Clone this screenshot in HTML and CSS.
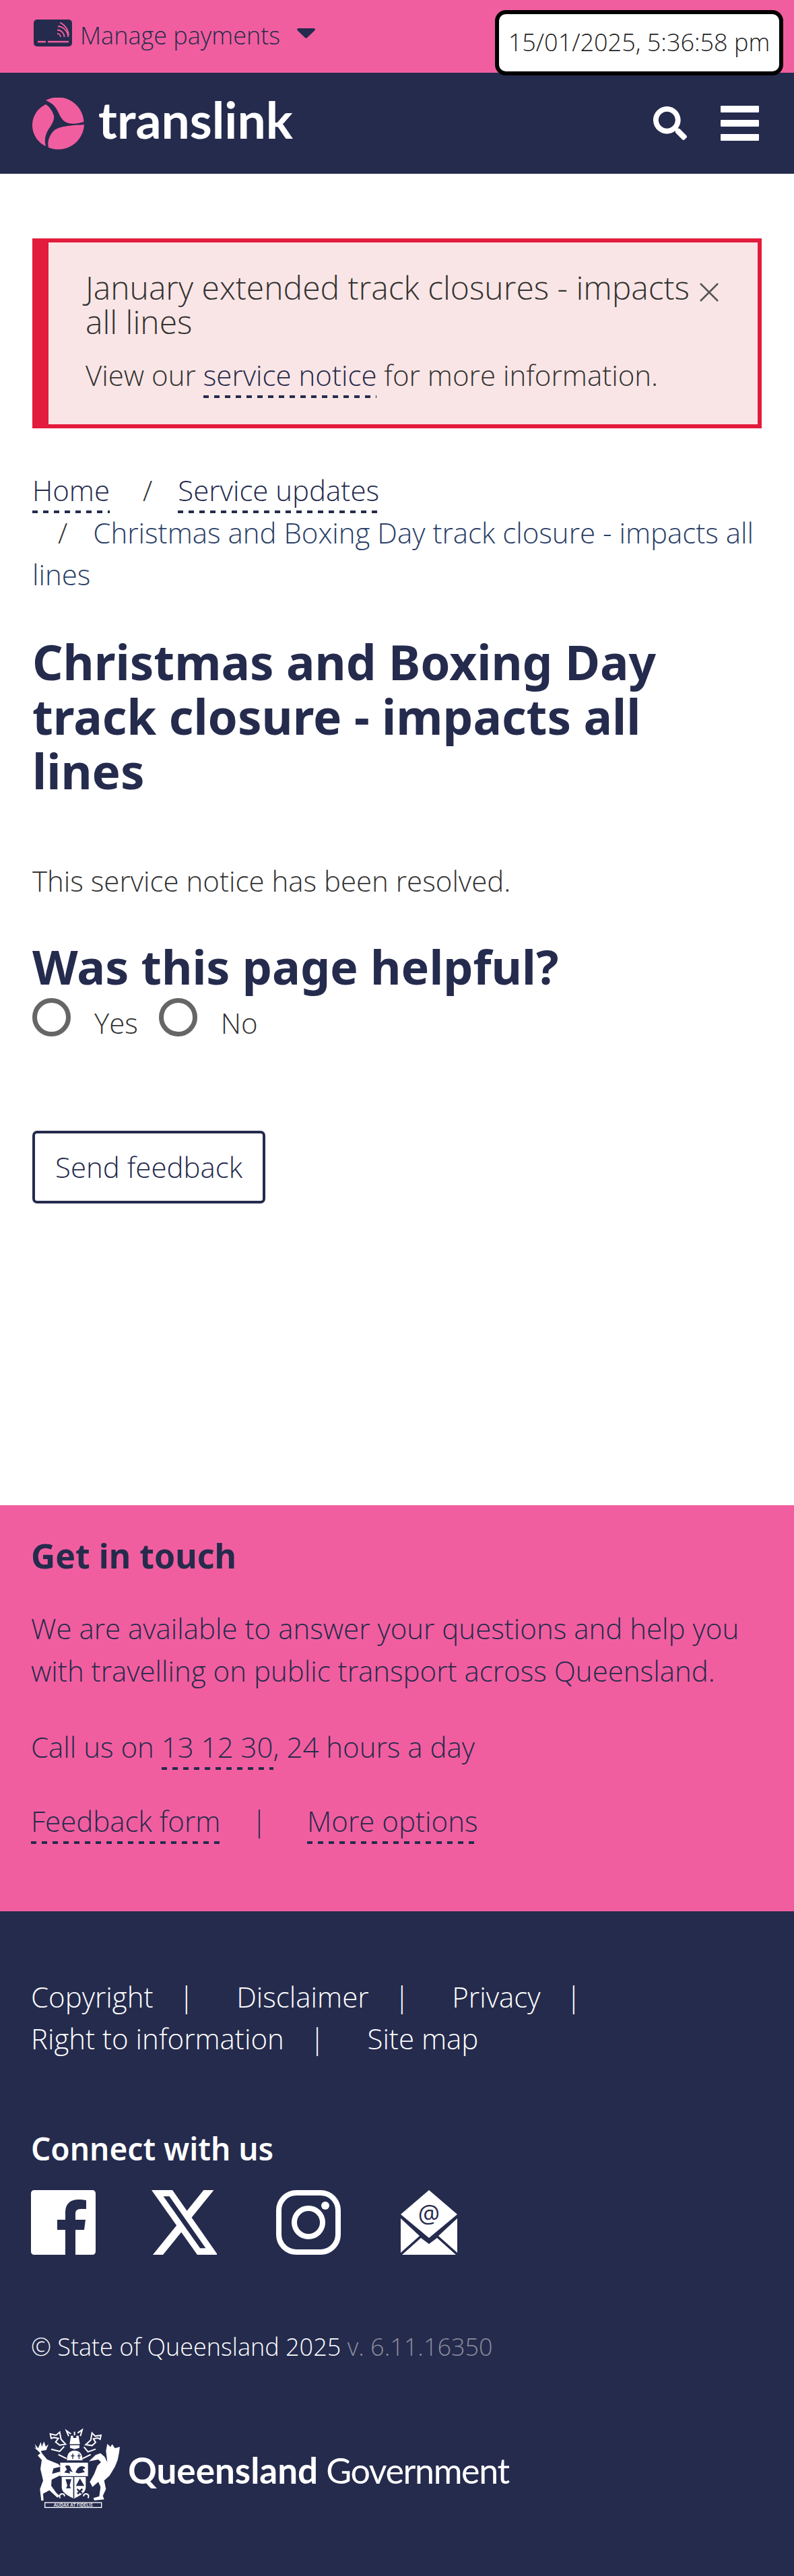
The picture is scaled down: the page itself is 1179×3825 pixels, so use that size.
FILE: index.html
```html
<!DOCTYPE html>
<html lang="en">
<head>
  <meta charset="UTF-8">
  <meta name="viewport" content="width=device-width, initial-scale=1.0">
  <title>Christmas and Boxing Day track closure - impacts all lines</title>
  <link rel="stylesheet" href="styles.css">
</head>
<body>
  <div class="top-bar">
    <a class="payments" href="#">
      <svg class="card-icon" viewBox="0 0 57 40">
        <rect width="57" height="40" rx="5" fill="#252b4d"/>
        <path d="M6 33H18M21 33H52" stroke="#f15e9f" stroke-width="2.4" fill="none"/>
        <path d="M35 21a5 5 0 0 1 5 5M35 15.500a10.500 10.500 0 0 1 10.500 10.500M36 10a16 16 0 0 1 15 16M39 4.500a22 22 0 0 1 13 19" stroke="#f15e9f" stroke-width="1.800" fill="none"/>
      </svg>
      <span>Manage payments</span>
      <svg class="caret" viewBox="0 0 27 15"><path d="M2 0H25C27 0 27.500 2 26 3.500L15 14C14 15 13 15 12 14L1 3.500C-.5 2 0 0 2 0Z" fill="#252b4d"/></svg>
    </a>
    <div class="clock">15/01/2025, 5:36:58 pm</div>
  </div>

  <header class="site-header">
    <a class="logo" href="#">
      <svg class="logo-mark" viewBox="0 0 77 77">
        <path d="M20 4A38.500 38.500 0 0 1 76.500 36C66 39 56 40 49 36C41 31 40 22 34 14C30 9 25 6 20 4Z" fill="#f15e9f"/>
        <path d="M20 10A34 34 0 0 0 20 72C17 62 20 54 24 47C29 40 33 33 32 27C30 20 26 14 20 10Z" fill="#f15e9f"/>
        <path d="M77 40A38.500 38.500 0 0 1 24 74C22 66 25 56 32 49C40 42 60 41 77 40Z" fill="#f15e9f"/>
      </svg>
      <span class="logo-text">translink</span>
    </a>
    <div class="header-actions">
      <svg class="search-icon" viewBox="0 0 512 512"><path fill="#fff" d="M505 442.700L405.300 343c-4.500-4.500-10.600-7-17-7H372c27.600-35.300 44-79.700 44-128C416 93.100 322.900 0 208 0S0 93.100 0 208s93.100 208 208 208c48.300 0 92.700-16.400 128-44v16.300c0 6.400 2.500 12.500 7 17l99.700 99.700c9.400 9.400 24.600 9.400 33.900 0l28.300-28.300c9.400-9.400 9.400-24.600.1-34zM208 336c-70.700 0-128-57.200-128-128 0-70.700 57.200-128 128-128 70.700 0 128 57.200 128 128 0 70.700-57.200 128-128 128z"/></svg>
      <div class="burger"><i></i><i></i><i></i></div>
    </div>
  </header>

  <main class="content">
    <div class="alert">
      <div class="alert-top">
        <h3>January extended track closures - impacts all lines</h3>
        <svg class="alert-close" viewBox="0 0 28 28"><path d="M1 1L27 27M27 1L1 27" stroke="#555" stroke-width="2.500"/></svg>
      </div>
      <p>View our <a href="#">service notice</a> for more information.</p>
    </div>

    <ol class="breadcrumb">
      <li><a href="#">Home</a></li>
      <li><span class="sep">/</span><a href="#">Service updates</a></li>
      <li class="current"><span class="sep">/</span>Christmas and Boxing Day track closure - impacts all lines</li>
    </ol>

    <h1>Christmas and Boxing Day track closure - impacts all lines</h1>
    <p class="resolved">This service notice has been resolved.</p>

    <h2>Was this page helpful?</h2>
    <div class="helpful">
      <label><i class="radio"></i>Yes</label>
      <label><i class="radio"></i>No</label>
    </div>
    <button class="feedback-btn">Send feedback</button>
  </main>

  <section class="get-in-touch">
    <h4>Get in touch</h4>
    <p class="intro">We are available to answer your questions and help you with travelling on public transport across Queensland.</p>
    <p>Call us on <a href="#">13 12 30</a>, 24 hours a day</p>
    <p class="touch-links"><a href="#">Feedback form</a><span class="pipe">|</span><a href="#">More options</a></p>
  </section>

  <footer class="site-footer">
    <ul class="footer-links">
      <li><a href="#">Copyright</a><span class="pipe">|</span></li>
      <li><a href="#">Disclaimer</a><span class="pipe">|</span></li>
      <li><a href="#">Privacy</a><span class="pipe">|</span></li>
      <li><a href="#">Right to information</a><span class="pipe">|</span></li>
      <li><a href="#">Site map</a></li>
    </ul>

    <h4>Connect with us</h4>
    <div class="social">
      <svg class="fb" viewBox="0 0 96 96">
        <path fill="#fff" fill-rule="evenodd" d="M5 0H91C94 0 96 2 96 5V91C96 94 94 96 91 96H66V59H79L81 44H66V35C66 31 68 28 74 28H82V15C79 14.500 75 14 70 14C59 14 51 20 51 33V44H39V59H51V96H5C2 96 0 94 0 91V5C0 2 2 0 5 0Z"/>
      </svg>
      <svg class="x" viewBox="1.250 2.250 21.300 19.500" preserveAspectRatio="none">
        <path fill="#fff" d="M18.244 2.250h3.308l-7.227 8.260 8.502 11.240H16.170l-5.214-6.817L4.990 21.750H1.680l7.730-8.835L1.254 2.250H8.080l4.713 6.231zm-1.161 17.520h1.833L7.084 4.126H5.117z"/>
      </svg>
      <svg class="insta" viewBox="0 0 96 96">
        <rect x="4" y="4" width="88" height="88" rx="26" fill="none" stroke="#fff" stroke-width="8"/>
        <circle cx="48" cy="48" r="21" fill="none" stroke="#fff" stroke-width="8"/>
        <circle cx="73" cy="23" r="6" fill="#fff"/>
      </svg>
      <svg class="mail" viewBox="0 0 85 96">
        <path fill="#fff" d="M42 0L84 36L42 71L0 36Z"/>
        <path fill="#fff" d="M0 42L28 68L0 93ZM84 42L56 68L84 93ZM2 96L30 71L42 80L54 71L82 96Z"/>
        <text class="mail-at" x="42" y="48" text-anchor="middle">@</text>
      </svg>
    </div>

    <p class="copyright">© State of Queensland 2025 <span class="version">v. 6.11.16350</span></p>

    <div class="qld-gov">
      <svg class="crest" viewBox="0 0 450 405">
        <g fill="#fff">
          <path d="M28 112L40 120L36 100L50 118L62 90L66 112L76 88L84 110L96 100L86 126L62 130L68 142L90 168L140 188L150 200L118 208L112 232L148 222L150 238L110 258L108 285L130 316L145 330L136 338L100 305L72 320L74 350L64 352L58 300L72 262L60 210L66 170L48 150L60 140L48 128Z"/>
          <path d="M358 98L372 112L380 100L392 118L414 112L410 140L404 170L392 200L368 240L344 262L352 300L338 330L344 346L300 350L296 340L322 332L328 290L318 268L292 290L280 268L300 232L314 196L330 180L318 168L276 176L306 148L328 140L346 156L358 180L352 130Z"/>
          <path d="M148 182H272V242H148Z"/>
          <path d="M155 246H262V292C262 316 236 330 209 342C182 330 155 316 155 292Z"/>
          <path d="M178 172C178 148 186 128 212 128C238 128 248 148 248 172Z"/>
          <path d="M192 104H234V116L212 122L192 116ZM196 62H206V72H220V62H230L236 100H190Z"/>
        </g>
        <g fill="none" stroke="#fff" stroke-width="6">
          <path d="M186 64L176 40L196 54M238 64L246 36L226 50M212 60V44"/>
          <path d="M104 54L130 60L146 46L152 78L172 100L146 104L128 90L140 74L120 70L108 74ZM330 60L304 64L290 50L284 82L262 102L290 106L306 92L296 76L316 72L326 78Z"/>
          <path d="M108 122L146 132L166 110M306 122L272 134L254 112M140 146L176 164M284 146L248 164"/>
          <path d="M148 340C136 322 166 312 168 332M272 340C284 322 254 312 252 332"/>
        </g>
        <g fill="#252b4d">
          <path d="M206 246H211V340H206Z"/>
          <path d="M202 142H206V150H212V154H206V166H202V154H196V150H202ZM230 142H234V150H240V154H234V166H230V154H224V150H230Z"/>
          <path d="M170 198C182 190 196 196 194 208L204 224L190 220L192 230L166 226L178 212Z"/>
          <path d="M222 214C232 194 254 194 260 206L248 212L258 224L230 230L216 226Z"/>
          <path d="M172 256H198L190 284L196 296H174L180 284Z"/>
          <path d="M236 252L256 286H218Z"/>
          <path d="M224 296L248 316L242 322L222 304ZM244 296L250 302L228 324L222 318Z"/>
        </g>
        <rect x="80" y="360" width="252" height="22" fill="none" stroke="#fff" stroke-width="4"/>
        <text class="motto" x="206" y="377" text-anchor="middle">AUDAX AT FIDELIS</text>
      </svg>
      <span class="qld-name">Queensland</span><span class="qld-gov-word">Government</span>
    </div>
  </footer>
</body>
</html>
```

FILE: styles.css
```css
body {
  margin: 0;
  font-family: "Open Sans", sans-serif;
  font-weight: 300;
  font-size: 42px;
  line-height: 62px;
  color: #333;
  background-color: #fff;
  position: relative;
}
a {
  color: inherit;
  text-decoration: none;
}
p, h1, h2, h3, h4, ul, ol {
  margin: 0;
  padding: 0;
}

.top-bar {
  height: 108px;
  background-color: #f15e9f;
  color: #252b4d;
}
.payments {
  display: flex;
  align-items: flex-start;
  padding: 29px 0 0 50px;
  font-size: 36px;
  line-height: 48px;
}
.card-icon {
  width: 57px;
  height: 40px;
  margin-right: 12px;
}
.caret {
  width: 27px;
  height: 15px;
  margin: 13px 0 0 25px;
}
.clock {
  position: absolute;
  top: 15px;
  left: 735px;
  width: 416px;
  height: 85px;
  background-color: #fff;
  border: 6px solid #000;
  border-radius: 16px;
  font-size: 36px;
  line-height: 84px;
  color: #222;
  text-align: center;
}

.site-header {
  height: 150px;
  background-color: #252b4d;
  display: flex;
  justify-content: space-between;
  align-items: center;
  padding: 0 52px 0 48px;
}
.logo {
  display: flex;
  align-items: center;
}
.logo-mark {
  width: 77px;
  height: 77px;
  margin-right: 21px;
}
.logo-text {
  font-family: Lato, sans-serif;
  font-weight: 700;
  font-size: 75px;
  line-height: 76px;
  color: #fff;
  margin-top: -12px;
}
.header-actions {
  display: flex;
  align-items: center;
  gap: 50px;
}
.search-icon {
  width: 50px;
  height: 50px;
}
.burger {
  width: 57px;
}
.burger i {
  display: block;
  height: 10px;
  margin-bottom: 11px;
  background-color: #fff;
  border-radius: 1px;
}
.burger i:last-child {
  margin-bottom: 0;
}

.content {
  height: 1977px;
  box-sizing: border-box;
  padding: 96px 48px 0;
  color: #333;
}
.alert {
  height: 282px;
  box-sizing: border-box;
  border: 6px solid #e31b3c;
  border-left-width: 24px;
  background-color: #f9e5e5;
  padding: 41px 26px 0 55px;
  color: #333;
}
.alert-top {
  display: flex;
  align-items: flex-start;
}
.alert-top h3 {
  font-weight: 300;
  font-size: 48px;
  line-height: 51px;
  width: 912px;
  flex-shrink: 0;
}
.alert-close {
  width: 28px;
  height: 28px;
  flex-shrink: 0;
  margin-top: 19px;
}
.alert p {
  margin-top: 23px;
}
/* dashed link underline, spaced wider than a css dashed border */
.alert a, .breadcrumb a, .get-in-touch a {
  padding-bottom: 6px;
  background-image: repeating-linear-gradient(90deg, #252b4d 0, #252b4d 8px, transparent 8px, transparent 16px);
  background-size: 100% 4px;
  background-position: left bottom;
  background-repeat: no-repeat;
}
.alert a {
  color: #252b4d;
}

.breadcrumb {
  list-style: none;
  margin-top: 61px;
  line-height: 62.500px;
  color: #252b4d;
}
.breadcrumb li {
  display: inline;
}
.breadcrumb li.current {
  display: block;
  color: #2b3f68;
}
.sep {
  margin: 0 38px;
  color: #333;
}

h1, h2, .get-in-touch h4, .site-footer h4 {
  font-family: "Noto Sans", sans-serif;
  font-weight: 700;
}
h1 {
  margin-top: 57px;
  max-width: 1000px;
  font-size: 71px;
  line-height: 81px;
  color: #252b4d;
}
.resolved {
  margin-top: 92px;
}
h2 {
  margin-top: 56px;
  font-size: 70px;
  line-height: 81px;
  color: #252b4d;
}
.helpful {
  display: flex;
}
.helpful label {
  display: flex;
  align-items: center;
  margin-right: 31px;
  padding-top: 8px;
  line-height: 70px;
}
.radio {
  display: block;
  width: 57px;
  height: 57px;
  box-sizing: border-box;
  border: 7px solid #666;
  border-radius: 50%;
  margin: -16px 35px 0 0;
}
.feedback-btn {
  display: block;
  margin-top: 125px;
  width: 346px;
  height: 108px;
  background-color: #fff;
  border: 4px solid #252b4d;
  border-radius: 7px;
  font-family: inherit;
  font-weight: 300;
  font-size: 42px;
  color: #252b4d;
  padding: 0;
}

.get-in-touch {
  height: 603px;
  box-sizing: border-box;
  background-color: #f15e9f;
  color: #252b4d;
  padding: 43px 46px 0;
}
.get-in-touch h4 {
  font-size: 50px;
  line-height: 64px;
  margin-bottom: 44px;
}
.get-in-touch p {
  line-height: 63px;
  margin-bottom: 47px;
}
.get-in-touch .intro {
  margin-bottom: 50px;
}
.get-in-touch .pipe {
  padding: 0 60px 0 46px;
}

.site-footer {
  height: 987px;
  box-sizing: border-box;
  background-color: #252b4d;
  color: #fff;
  padding: 96px 46px 0;
}
.footer-links {
  list-style: none;
}
.footer-links li {
  display: inline-block;
}
.footer-links .pipe {
  padding: 0 52px 0 38px;
}
.site-footer h4 {
  font-size: 46px;
  font-weight: 600;
  line-height: 62px;
  margin-top: 101px;
}
.social {
  display: flex;
  align-items: flex-start;
  margin-top: 31px;
}
.social svg {
  height: 96px;
}
.fb {
  width: 96px;
  margin-right: 83px;
}
.x {
  width: 97px;
  margin-right: 88px;
}
.insta {
  width: 96px;
  margin-right: 89px;
}
.mail {
  width: 85px;
}
.mail-at {
  font-family: "Open Sans", sans-serif;
  font-size: 36px;
  font-weight: 400;
  fill: #252b4d;
}
.copyright {
  margin-top: 106px;
  font-size: 36px;
}
.version {
  color: #8a8d9c;
}
.qld-gov {
  display: flex;
  align-items: center;
  margin-top: 80px;
  margin-left: -6px;
}
.crest {
  width: 150px;
  height: 135px;
}
.motto {
  font-family: "Open Sans", sans-serif;
  font-size: 20px;
  font-weight: 600;
  fill: #fff;
}
.qld-name, .qld-gov-word {
  font-family: Lato, sans-serif;
  font-size: 53px;
  margin-top: 8px;
}
.qld-name {
  font-weight: 700;
  margin-right: 12px;
}
.qld-gov-word {
  font-weight: 400;
  font-size: 52px;
  letter-spacing: -1.400px;
}
```
